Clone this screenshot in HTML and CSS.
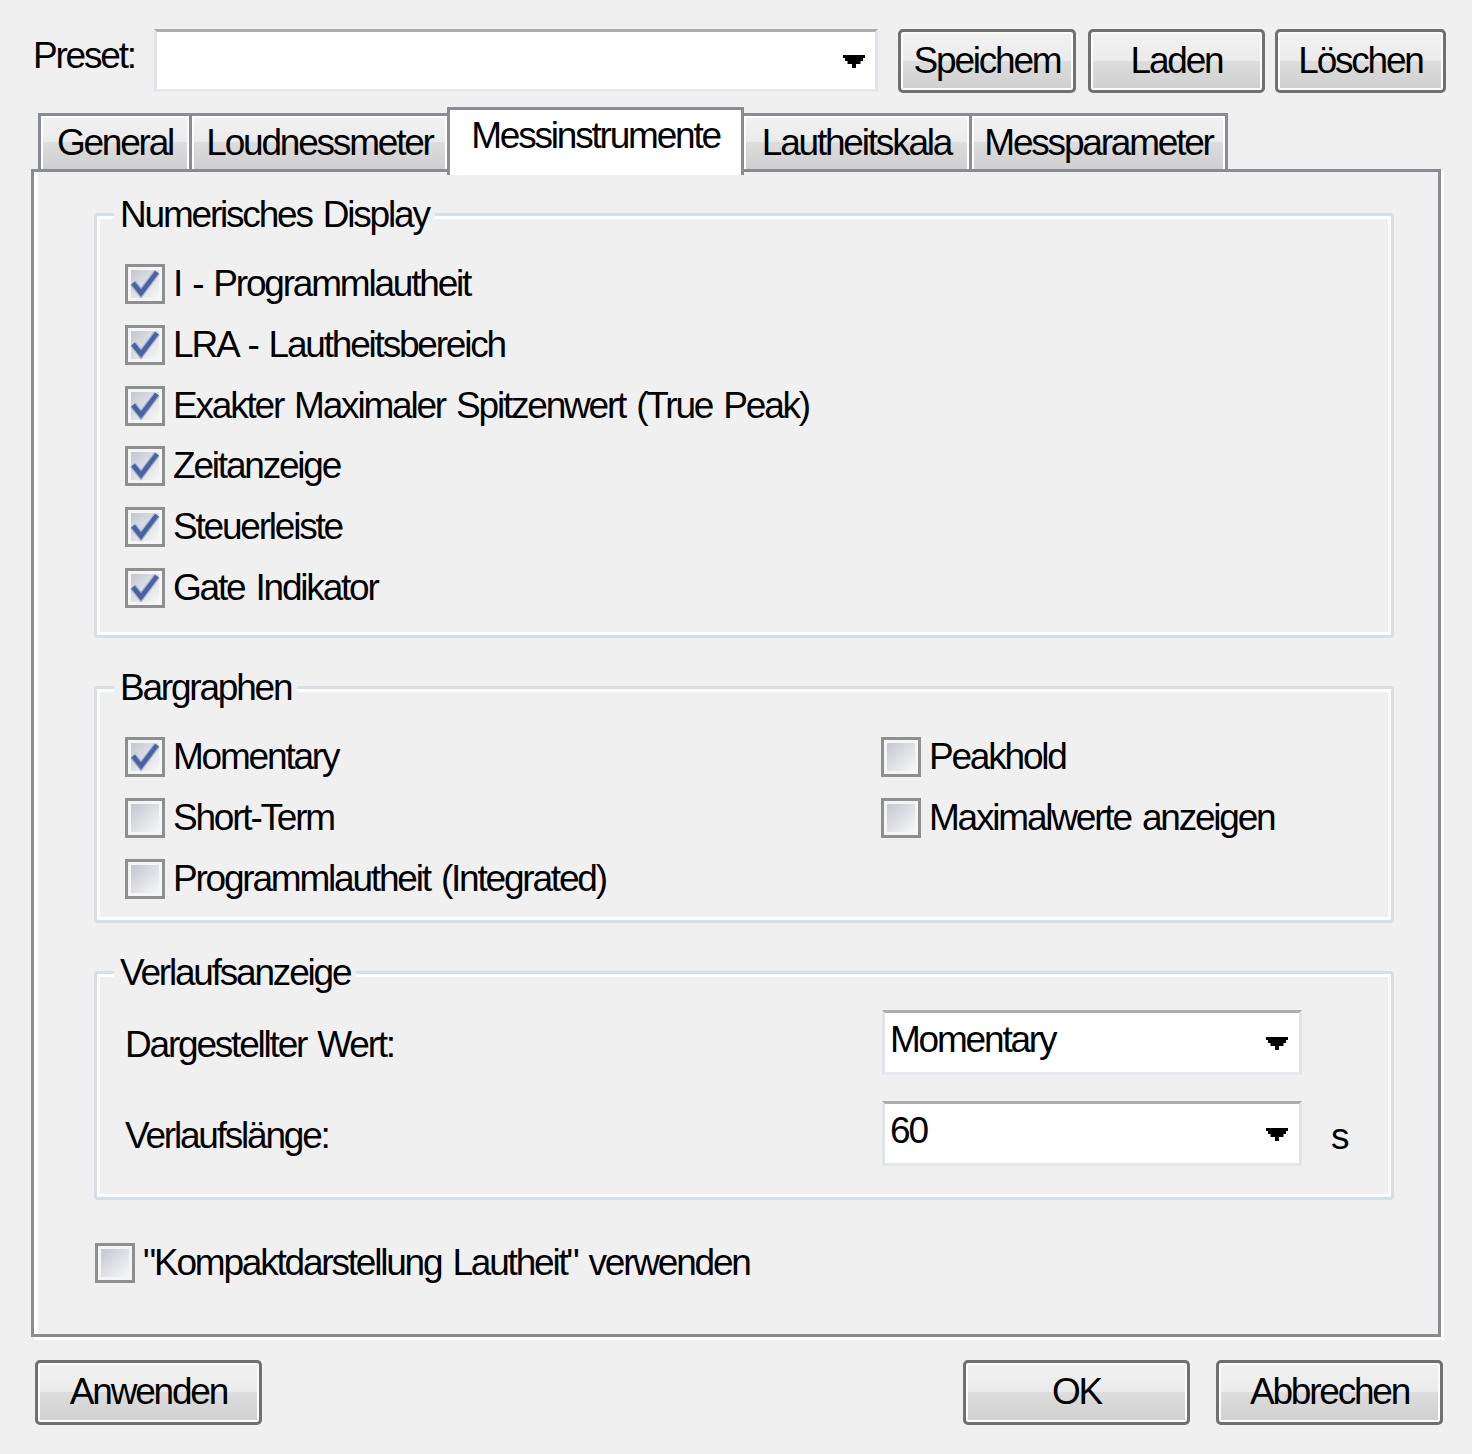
FILE: index.html
```html
<!DOCTYPE html>
<html lang="de">
<head>
<meta charset="utf-8">
<title>Einstellungen</title>
<link rel="stylesheet" href="styles.css">
</head>
<body>
<svg class="defs" aria-hidden="true">
  <defs>
    <linearGradient id="cbg" x1="0" y1="0" x2="1" y2="1">
      <stop offset="0" stop-color="#c3c7cf"/>
      <stop offset="1" stop-color="#f7f7f7"/>
    </linearGradient>
    <symbol id="cb" viewBox="0 0 40 40">
      <rect x="1.5" y="1.5" width="37" height="37" fill="#f5f5f5" stroke="#8e8f8f" stroke-width="3"/>
      <rect x="6" y="6" width="28" height="28" fill="url(#cbg)"/>
    </symbol>
    <symbol id="cbc" viewBox="0 0 40 40">
      <rect x="1.5" y="1.5" width="37" height="37" fill="#f5f5f5" stroke="#8e8f8f" stroke-width="3"/>
      <rect x="6" y="6" width="28" height="28" fill="url(#cbg)"/>
      <path d="M8 19 L16 29 L32 8" fill="none" stroke="#a4b3d8" stroke-width="7"/>
      <path d="M8 19 L16 29 L32 8" fill="none" stroke="#4c61a0" stroke-width="4.5"/>
    </symbol>
    <symbol id="arr" viewBox="0 0 22 13">
      <polygon points="0,0 22,0 22,3 20,3 20,6 17.5,6 17.5,9 13,9 13,13 9,13 9,9 4.5,9 4.5,6 2,6 2,3 0,3" fill="#000"/>
    </symbol>
  </defs>
</svg>

<div class="dialog">
  <div class="top-row">
    <span class="preset-label">Preset:</span>
    <div class="combo combo-preset">
      <span class="combo-text"></span>
      <svg class="arrow"><use href="#arr"/></svg>
    </div>
    <button class="btn btn-save">Speichem</button>
    <button class="btn btn-load">Laden</button>
    <button class="btn btn-del">Löschen</button>
  </div>

  <div class="tabs">
    <div class="tab tab-general">General</div>
    <div class="tab tab-loud">Loudnessmeter</div>
    <div class="tab tab-mess active">Messinstrumente</div>
    <div class="tab tab-laut">Lautheitskala</div>
    <div class="tab tab-param">Messparameter</div>
  </div>

  <div class="panel">
    <div class="group g1">
      <div class="group-title">Numerisches Display</div>
      <div class="checklist">
        <label class="cb"><svg class="box"><use href="#cbc"/></svg><span>I - Programmlautheit</span></label>
        <label class="cb"><svg class="box"><use href="#cbc"/></svg><span>LRA - Lautheitsbereich</span></label>
        <label class="cb"><svg class="box"><use href="#cbc"/></svg><span>Exakter Maximaler Spitzenwert (True Peak)</span></label>
        <label class="cb"><svg class="box"><use href="#cbc"/></svg><span>Zeitanzeige</span></label>
        <label class="cb"><svg class="box"><use href="#cbc"/></svg><span>Steuerleiste</span></label>
        <label class="cb"><svg class="box"><use href="#cbc"/></svg><span>Gate Indikator</span></label>
      </div>
    </div>

    <div class="group g2">
      <div class="group-title">Bargraphen</div>
      <div class="bar-grid">
        <label class="cb"><svg class="box"><use href="#cbc"/></svg><span>Momentary</span></label>
        <label class="cb"><svg class="box"><use href="#cb"/></svg><span>Peakhold</span></label>
        <label class="cb"><svg class="box"><use href="#cb"/></svg><span>Short-Term</span></label>
        <label class="cb"><svg class="box"><use href="#cb"/></svg><span>Maximalwerte anzeigen</span></label>
        <label class="cb"><svg class="box"><use href="#cb"/></svg><span>Programmlautheit (Integrated)</span></label>
      </div>
    </div>

    <div class="group g3">
      <div class="group-title">Verlaufsanzeige</div>
      <div class="vrow vrow-first">
        <span class="vlabel">Dargestellter Wert:</span>
        <div class="combo combo-field">
          <span class="combo-text">Momentary</span>
          <svg class="arrow"><use href="#arr"/></svg>
        </div>
      </div>
      <div class="vrow vrow-second">
        <span class="vlabel">Verlaufslänge:</span>
        <div class="combo combo-field">
          <span class="combo-text">60</span>
          <svg class="arrow"><use href="#arr"/></svg>
        </div>
        <span class="unit">s</span>
      </div>
    </div>

    <label class="cb compact"><svg class="box"><use href="#cb"/></svg><span>"Kompaktdarstellung Lautheit" verwenden</span></label>
  </div>

  <div class="bottom-row">
    <button class="btn btn-apply">Anwenden</button>
    <button class="btn btn-ok">OK</button>
    <button class="btn btn-cancel">Abbrechen</button>
  </div>
</div>
</body>
</html>
```

FILE: styles.css
```css
* {
  box-sizing: border-box;
}

html,
body {
  margin: 0;
  padding: 0;
}

body {
  background: #f0f0f0;
  font-family: "Liberation Sans", Arial, sans-serif;
  font-size: 37px;
  letter-spacing: -2.2px;
  word-spacing: 3px;
  color: #000;
}

.defs {
  position: absolute;
  width: 0;
  height: 0;
  overflow: hidden;
}

.dialog {
  width: 1472px;
  padding: 29px 0 0 31px;
}

/* ---------- top row ---------- */
.top-row {
  display: flex;
  align-items: center;
  height: 64px;
}

.preset-label {
  align-self: flex-start;
  width: 121px;
  margin: 5px 0 0 2px;
  line-height: 44px;
}

.combo {
  display: flex;
  align-items: center;
  justify-content: space-between;
  background: #fff;
  border-style: solid;
  border-width: 3px;
  border-color: #abadb3 #e2e3ea #e3e9ef #e2e3ea;
}

.combo-preset {
  width: 724px;
  height: 63px;
  align-self: flex-start;
  padding: 0 10px 0 5px;
}

.combo-text {
  line-height: 44px;
  padding-bottom: 4px;
}

.arrow {
  width: 22px;
  height: 13px;
  flex: none;
}

.combo-preset .arrow {
  margin-top: 2px;
}

.btn {
  height: 64px;
  padding: 0;
  border: 3px solid #707070;
  border-radius: 5px;
  background: linear-gradient(#f2f2f2 0%, #ebebeb 50%, #dddddd 50%, #cfcfcf 100%);
  box-shadow: inset 0 0 0 2px #fcfcfc;
  font: inherit;
  letter-spacing: inherit;
  word-spacing: inherit;
  color: #000;
  line-height: 44px;
}

.btn-save {
  width: 178px;
  margin-left: 20px;
}

.btn-load {
  width: 177px;
  margin-left: 12px;
}

.btn-del {
  width: 171px;
  margin-left: 10px;
}

/* ---------- tabs ---------- */
.tabs {
  display: flex;
  align-items: flex-start;
  height: 62px;
  margin: 14px 0 0 7px;
}

.tab {
  display: flex;
  align-items: center;
  justify-content: center;
  height: 56px;
  margin-top: 6px;
  margin-left: -3px;
  border: 3px solid #898c95;
  border-bottom: 0;
  background: linear-gradient(#f2f2f2 0%, #ebebeb 50%, #dddddd 50%, #cfcfcf 100%);
  box-shadow: inset 2px 2px 0 #fff, inset -2px 0 0 #fff;
  line-height: 44px;
  white-space: nowrap;
}

.tab:first-child {
  margin-left: 0;
}

.tab.active {
  position: relative;
  z-index: 2;
  height: 68px;
  margin-top: 0;
  align-items: flex-start;
  padding-top: 4px;
  background: #fff;
  box-shadow: none;
}

.tab-general { width: 154px; }
.tab-loud { width: 261px; }
.tab-mess { width: 297px; }
.tab-laut { width: 231px; }
.tab-param { width: 259px; }

/* ---------- panel ---------- */
.panel {
  width: 1410px;
  border: 3px solid #898c95;
  box-shadow: inset 4px 0 0 #fff, 3px 3px 0 #fff;
  padding: 41px 44px 51px 60px;
}

.group {
  border: 3px solid #d5dfe5;
  border-radius: 4px;
  box-shadow: inset 0 0 0 3px #fff;
}

.g2,
.g3 {
  margin-top: 48px;
}

.group-title {
  width: fit-content;
  margin: -23px 0 0 17px;
  padding: 0 6px;
  background: #f0f0f0;
  line-height: 44px;
  white-space: nowrap;
}

.checklist {
  display: flex;
  flex-direction: column;
  gap: 20.8px;
  margin-top: 27px;
  padding-left: 28px;
}

.g1 {
  padding-bottom: 27px;
}

.bar-grid {
  display: grid;
  grid-template-columns: 756px auto;
  row-gap: 20.8px;
  margin-top: 27px;
  padding-left: 28px;
}

.g2 {
  padding-bottom: 21px;
}

.cb {
  display: flex;
  align-items: center;
  gap: 8px;
  height: 40px;
  line-height: 40px;
  white-space: nowrap;
}

.box {
  width: 40px;
  height: 40px;
  flex: none;
}

.g3 {
  padding-bottom: 31px;
}

.vrow {
  display: flex;
  align-items: center;
  height: 65px;
  padding-left: 28px;
}

.vrow-first {
  margin-top: 15px;
}

.vrow-second {
  margin-top: 26px;
}

.vlabel {
  width: 757px;
  padding-top: 6px;
  line-height: 44px;
}

.combo-field {
  width: 420px;
  height: 65px;
  padding: 0 11px 0 5px;
}

.combo-field .arrow {
  margin-top: 3px;
}

.unit {
  margin-left: 29px;
  padding-top: 8px;
  line-height: 44px;
}

.compact {
  margin: 43px 0 0 1px;
}

/* ---------- bottom row ---------- */
.bottom-row {
  display: flex;
  margin-top: 23px;
  padding-left: 4px;
}

.bottom-row .btn {
  width: 227px;
  height: 65px;
}

.btn-ok {
  margin-left: 701px;
}

.btn-cancel {
  margin-left: 26px;
}
```
